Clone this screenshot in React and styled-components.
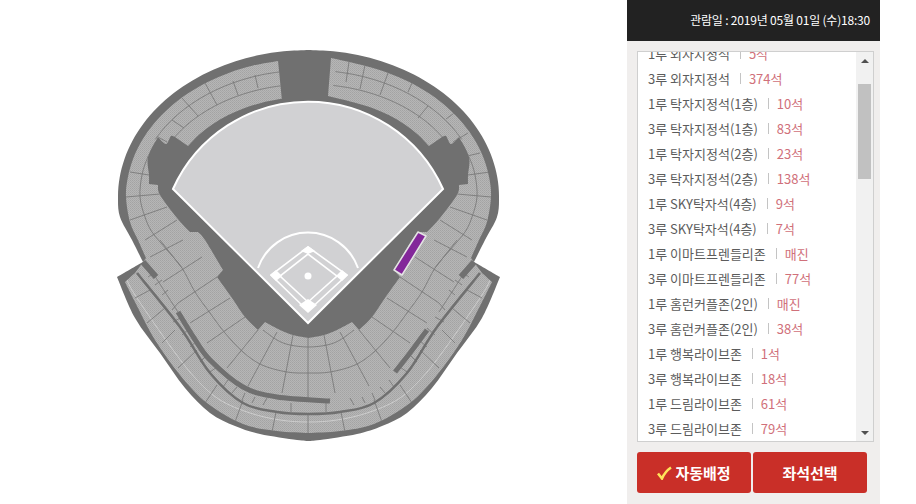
import styled, { createGlobalStyle } from "styled-components";

const GlobalStyle = createGlobalStyle`
  html, body {
    margin: 0;
    padding: 0;
    background: #fff;
  }
  body {
    font-family: "Noto Sans CJK KR", "Liberation Sans", sans-serif;
  }
`;

const Page = styled.div`
  display: flex;
  width: 916px;
  height: 504px;
  overflow: hidden;
`;

const MapArea = styled.div`
  width: 627px;
  height: 504px;
  flex-shrink: 0;
`;

const Panel = styled.div`
  width: 253px;
  height: 504px;
  background: #f0eeed;
  display: flex;
  flex-direction: column;
`;

const Header = styled.div`
  height: 41px;
  box-sizing: border-box;
  background: #222;
  color: #fff;
  font-size: 12px;
  letter-spacing: -0.2px;
  display: flex;
  align-items: center;
  justify-content: flex-end;
  padding: 0 10px 3px 0;
`;

const ListBox = styled.div`
  margin: 10px 6px 0 10px;
  height: 391px;
  box-sizing: border-box;
  border: 1px solid #cfcfcf;
  background: #fff;
  display: flex;
`;

const ListClip = styled.div`
  flex: 1;
  overflow: hidden;
`;

const Rows = styled.ul`
  list-style: none;
  margin: -11px 0 0;
  padding: 0 0 0 10px;
`;

const Row = styled.li`
  height: 25px;
  display: flex;
  align-items: center;
  font-size: 13px;
  color: #5c5c5c;
  white-space: nowrap;
`;

const Bar = styled.span`
  width: 1px;
  height: 11px;
  background: #c4c4c4;
  margin: 0 8px 0 10px;
`;

const Count = styled.span`
  color: #d0707a;
`;

const ScrollBar = styled.div`
  width: 17px;
  background: #f1f1f1;
  display: flex;
  flex-direction: column;
  align-items: center;
`;

const Arrow = styled.div`
  width: 0;
  height: 0;
  border-left: 4px solid transparent;
  border-right: 4px solid transparent;
  ${(p) => (p.$down ? "border-top: 4px solid #505050;" : "border-bottom: 4px solid #505050;")}
  margin: ${(p) => (p.$down ? "auto 0 6px" : "7px 0 0")};
`;

const Thumb = styled.div`
  width: 13px;
  height: 95px;
  margin-top: 21px;
  background: #c1c1c1;
`;

const Buttons = styled.div`
  display: flex;
  gap: 2px;
  margin: 10px 0 0 10px;
`;

const ActionButton = styled.button`
  width: 114px;
  height: 41px;
  border: 0;
  border-radius: 3px;
  background: #c92f28;
  color: #fff;
  font-family: inherit;
  font-size: 15px;
  font-weight: 700;
  display: flex;
  align-items: center;
  justify-content: center;
  gap: 3px;
  padding: 0;
`;

const seats = [
  ["1루 외자지정석", "5석"],
  ["3루 외자지정석", "374석"],
  ["1루 탁자지정석(1층)", "10석"],
  ["3루 탁자지정석(1층)", "83석"],
  ["1루 탁자지정석(2층)", "23석"],
  ["3루 탁자지정석(2층)", "138석"],
  ["1루 SKY탁자석(4층)", "9석"],
  ["3루 SKY탁자석(4층)", "7석"],
  ["1루 이마트프렌들리존", "매진"],
  ["3루 이마트프렌들리존", "77석"],
  ["1루 홈런커플존(2인)", "매진"],
  ["3루 홈런커플존(2인)", "38석"],
  ["1루 행복라이브존", "1석"],
  ["3루 행복라이브존", "18석"],
  ["1루 드림라이브존", "61석"],
  ["3루 드림라이브존", "79석"],
];

const AXIS = 617;
const MID = 308.5;

// smooth line through points
const curve = (pts) => {
  let d = "";
  for (let i = 0; i < pts.length - 1; i++) {
    const p0 = pts[i - 1] || pts[i];
    const p1 = pts[i];
    const p2 = pts[i + 1];
    const p3 = pts[i + 2] || p2;
    const c1 = [p1[0] + (p2[0] - p0[0]) / 6, p1[1] + (p2[1] - p0[1]) / 6];
    const c2 = [p2[0] - (p3[0] - p1[0]) / 6, p2[1] - (p3[1] - p1[1]) / 6];
    d += `C${c1[0]} ${c1[1]} ${c2[0]} ${c2[1]} ${p2[0]} ${p2[1]}`;
  }
  return d;
};

const build = (segs) => {
  let d = "";
  segs.forEach((s, i) => {
    d += `${i === 0 ? "M" : "L"}${s[0][0]} ${s[0][1]}` + curve(s);
  });
  return d + "Z";
};

const open = (pts) => `M${pts[0][0]} ${pts[0][1]}` + curve(pts);
const mirrorPts = (pts) => pts.map(([x, y]) => [AXIS - x, y]);
const mirrorRev = (segs) => [...segs].reverse().map((s) => mirrorPts([...s].reverse()));
const both = (pts) => [...pts, ...mirrorPts([...pts].reverse()).slice(1)];

// the upper stands follow ellipses round the same centre
const ell = (a, b, from, to, n = 10) => {
  const out = [];
  for (let i = 0; i <= n; i++) {
    const t = ((from + ((to - from) * i) / n) * Math.PI) / 180;
    out.push([MID - a * Math.sin(t), 197 - b * Math.cos(t)]);
  }
  return out;
};

const outerLeft = [
  [...ell(190.5, 147, 0, 90, 12), [120, 217], [132, 240], [143, 262]],
  [[143, 262], [117, 277]],
  [[117, 277], [135, 318], [160, 353], [185, 388], [210, 413], [235, 426], [260, 434], [297, 440], [MID, 441]],
];
const outerPath = build([...outerLeft, ...mirrorRev(outerLeft)]);

const seatOuter = [
  [...ell(182.5, 138, 9.6, 90, 10), [130, 222], [138, 240], [146, 258]],
  [[135, 273], [125, 282]],
  [[125, 282], [135, 302], [155, 340], [180, 375], [207, 403], [243, 424], [277, 431], [MID, 433]],
];
const seatInner = [
  ell(140, 100, 11, 59.4, 6),
  [[175, 137], [171, 136], [166, 144], [158, 137]],
  [[158, 137], [148, 157], [149, 175], [149, 184]],
  [[158, 185], [160, 195], [177, 218], [190, 232]],
  [[198, 232], [205, 240], [223, 270]],
  [[217, 277], [232, 298], [245, 317], [258, 330]],
  [[265, 322], [280, 330], [293, 335], [MID, 338]],
];

// the gap at the top sits a little left of the axis
const seatOuterRight = mirrorRev(seatOuter);
const lastOuter = seatOuterRight[seatOuterRight.length - 1];
lastOuter[lastOuter.length - 1] = [331, 58];
const seatInnerRight = seatInner.map(mirrorPts);
seatInnerRight[0][0] = [328, 96];
const seatInnerLeftBack = [...seatInner].reverse().map((s) => [...s].reverse());
const seatPath = build([...seatOuter, ...seatOuterRight, ...seatInnerRight, ...seatInnerLeftBack]);

const sideArcs = [
  ell(172, 127, 9, 63, 8),
  ell(158, 113, 9, 58, 8),
  [[153, 273], [165, 292], [178, 312]],
];
const fullArcs = [
  [[159, 138], [148, 157], [142, 175], [140, 197], [145, 217], [152, 232], [167, 250], [182, 268], [195, 292], [210, 313], [225, 333], [243, 352], [262, 365], [287, 372], [MID, 373]],
  [[263, 330], [277, 340], [290, 345], [MID, 347]],
].map(both);

const radialsLeft = [
  [126, 197, 160, 194], [130, 220, 167, 207], [145, 240, 177, 220],
  [150, 257, 183, 240], [160, 240, 182, 268], [163, 282, 202, 257], [178, 303, 217, 277], [190, 323, 230, 298],
  [207, 343, 245, 317], [227, 368, 258, 330], [248, 386, 277, 332], [282, 393, 293, 335],
  [148, 277, 155, 272], [155, 285, 162, 280], [162, 295, 168, 290], [172, 310, 178, 303],
  [173, 322, 182, 317], [182, 335, 190, 328], [190, 347, 198, 340], [200, 362, 207, 355], [210, 372, 217, 367],
  [223, 387, 228, 380], [232, 393, 237, 387], [242, 400, 245, 393], [252, 403, 255, 397], [263, 405, 267, 398], [291, 403, 291, 412],
  [135, 298, 150, 290], [147, 323, 165, 308], [162, 343, 175, 330], [178, 368, 197, 350], [205, 403, 217, 385], [235, 422, 243, 400], [272, 432, 276, 412],
];
const radialsTopLeft = [
  [255, 75, 258, 88], [233, 81, 238, 95], [205, 83, 217, 105], [182, 98, 198, 116], [172, 120, 184, 128],
  [158, 137, 167, 142], [147, 157, 155, 159], [130, 172, 149, 175],
];
const radialsTopRight = [
  [349, 62, 346, 82], [365, 65, 360, 89], [388, 73, 380, 95], [412, 83, 408, 92], [428, 106, 418, 118],
  [446, 119, 457, 111], [468, 133, 453, 142], [463, 157, 480, 153], [468, 175, 490, 172],
];
const radialsCentre = [[308, 338, 308, 398], [308, 415, 308, 433]];

const lightArc = [[125, 275], [135, 295], [173, 350], [197, 380], [220, 400], [250, 413], [280, 420], [MID, 422]];
const thinAisle = [[137, 273], [180, 327], [210, 373], [243, 403], [277, 412], [MID, 414]];
const bandLeft = [[178, 312], [194, 338], [210, 360], [243, 387], [277, 397], [330, 401]];
const bandRight = [[395, 372], [410, 353], [427, 330]];

const Segments = ({ list, mirrored }) =>
  list.map(([x1, y1, x2, y2], i) => (
    <line key={i} x1={mirrored ? AXIS - x1 : x1} y1={y1} x2={mirrored ? AXIS - x2 : x2} y2={y2} />
  ));

function Stadium() {
  return (
    <svg width="627" height="504" viewBox="0 0 627 504">
      <defs>
        <pattern id="seatDots" width="2" height="2" patternUnits="userSpaceOnUse">
          <rect width="2" height="2" fill="#b6b6b6" />
          <rect width="1" height="1" fill="#a3a3a3" />
          <rect x="1" y="1" width="1" height="1" fill="#a9a9a9" />
        </pattern>
        <clipPath id="seatClip">
          <path d={seatPath} />
        </clipPath>
      </defs>

      <path d={outerPath} fill="#707070" />
      <path d={seatPath} fill="url(#seatDots)" />

      <g clipPath="url(#seatClip)">
        <path d={open(both(lightArc))} fill="none" stroke="#cdcdcd" strokeWidth="1" />
        <g fill="none" stroke="#7a7a7a" strokeWidth="0.9">
          {fullArcs.map((a, i) => (
            <path key={i} d={open(a)} />
          ))}
          {sideArcs.map((a, i) => (
            <path key={i} d={open(a)} />
          ))}
          {sideArcs.map((a, i) => (
            <path key={i} d={open(mirrorPts(a))} />
          ))}
        </g>
        <g stroke="#7a7a7a" strokeWidth="0.9">
          <Segments list={radialsLeft} />
          <Segments list={radialsLeft} mirrored />
          <Segments list={radialsTopLeft} />
          <Segments list={radialsTopRight} />
          <Segments list={radialsCentre} />
        </g>
      </g>

      <g fill="none" stroke="#707070">
        <path d={open(both(thinAisle))} strokeWidth="2.5" />
        <path d={open(bandLeft)} strokeWidth="5" />
        <path d={open(bandRight)} strokeWidth="5" />
        <line x1="143" y1="262" x2="156" y2="277" strokeWidth="6" />
        <line x1={AXIS - 143} y1="262" x2={AXIS - 156} y2="277" strokeWidth="6" />
      </g>

      <path d="M308 323L173 189A148 148 0 0 1 443 189Z" fill="#d1d1d3" stroke="#fff" strokeWidth="2" />
      <path d="M258 268A53 53 0 0 1 358 268" fill="none" stroke="#fff" strokeWidth="2" />
      <polygon points="308,247 347,275 308,311 271,275" fill="#d1d1d3" stroke="#fff" strokeWidth="1.6" />
      <polygon points="308,254 337,276 308,302 280,276" fill="none" stroke="#fff" strokeWidth="1.6" />
      <polygon points="301,251 308,246 315,251 308,254" fill="#fff" />
      <polygon points="299,305 308,299 317,305 308,313" fill="#fff" />
      <polygon points="270,275 276,270 282,276 276,281" fill="#fff" />
      <polygon points="348,275 342,270 336,276 342,281" fill="#fff" />
      <circle cx="308" cy="276" r="3.5" fill="#fff" />

      <polygon points="418,232 426,236 402,275 394,270" fill="#83279a" stroke="#e4e4e4" strokeWidth="1.5" strokeLinejoin="round" />
    </svg>
  );
}

const CheckIcon = () => (
  <svg width="15" height="14" viewBox="0 0 15 14">
    <path d="M1 7.5L5 12.5C7 8 9.5 4.5 14 1.5" fill="none" stroke="#ffe45a" strokeWidth="2.6" />
  </svg>
);

export default function App() {
  return (
    <Page>
      <GlobalStyle />
      <MapArea>
        <Stadium />
      </MapArea>
      <Panel>
        <Header>관람일 : 2019년 05월 01일 (수)18:30</Header>
        <ListBox>
          <ListClip>
            <Rows>
              {seats.map(([name, count]) => (
                <Row key={name}>
                  {name}
                  <Bar />
                  <Count>{count}</Count>
                </Row>
              ))}
            </Rows>
          </ListClip>
          <ScrollBar>
            <Arrow />
            <Thumb />
            <Arrow $down />
          </ScrollBar>
        </ListBox>
        <Buttons>
          <ActionButton>
            <CheckIcon />
            자동배정
          </ActionButton>
          <ActionButton>좌석선택</ActionButton>
        </Buttons>
      </Panel>
    </Page>
  );
}
